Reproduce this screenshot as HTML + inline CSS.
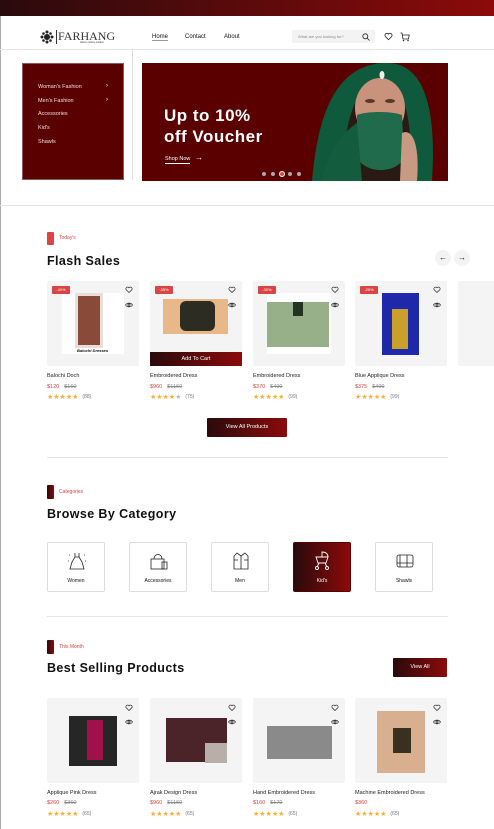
<!DOCTYPE html>
<html><head><meta charset="utf-8"><style>
*{margin:0;padding:0;box-sizing:border-box}
body{width:494px;height:829px;position:relative;background:#fff;font-family:"Liberation Sans",sans-serif;overflow:hidden;color:#111}
.a{position:absolute}
.grad{background:linear-gradient(90deg,#2a0a0c,#8c0a0a)}
.t{position:absolute;white-space:nowrap}
.card{position:absolute;width:92px;height:85px;background:#f4f4f4;border-radius:2px}
.disc{position:absolute;left:5px;top:5px;width:18px;height:8px;background:#db4444;color:#fff;font-size:4px;text-align:center;line-height:8px;border-radius:1px}
.nm{position:absolute;font-size:5.5px;color:#222}
.pr{position:absolute;font-size:5.5px}
.pr b{color:#db4444;font-weight:normal;margin-right:5px}
.pr s{color:#888;text-decoration:line-through}
.st{position:absolute;font-size:7px;color:#ffad33;letter-spacing:0;line-height:8px}
.st span{color:#777;font-size:5px;margin-left:4px;vertical-align:1px}
.cat{position:absolute;width:58px;height:50px;border:1px solid #ddd;border-radius:2px;text-align:center;font-size:5px}
.cat svg{position:absolute;left:19px;top:8px}
.cat div{position:absolute;width:100%;top:35px}
.hd{font-size:12.5px;font-weight:bold;letter-spacing:.4px}
.lbl{font-size:5px;color:#db4444}
</style></head><body>
<div class="a" style="left:0;top:0;width:1px;height:829px;background:#aaa"></div>
<div class="a grad" style="left:0;top:0;width:494px;height:16px"></div>
<svg class="a" style="left:40px;top:30px" width="14" height="14" viewBox="0 0 14 14"><g fill="#222"><circle cx="7" cy="7" r="3"/><circle cx="7" cy="2" r="1.5"/><circle cx="7" cy="12" r="1.5"/><circle cx="2" cy="7" r="1.5"/><circle cx="12" cy="7" r="1.5"/><circle cx="3.5" cy="3.5" r="1.3"/><circle cx="10.5" cy="3.5" r="1.3"/><circle cx="3.5" cy="10.5" r="1.3"/><circle cx="10.5" cy="10.5" r="1.3"/></g></svg>
<div class="a" style="left:56px;top:30px;width:1px;height:14px;background:#333"></div>
<div class="t" style="left:58px;top:29px;font-family:'Liberation Serif',serif;font-size:12px;color:#333">FARHANG</div>
<div class="t" style="left:80px;top:41px;font-size:2.5px;color:#333">where culture resides</div>
<div class="t" style="left:152px;top:34px;font-size:6px;border-bottom:1px solid #999">Home</div>
<div class="t" style="left:185px;top:34px;font-size:6px">Contact</div>
<div class="t" style="left:224px;top:34px;font-size:6px">About</div>
<div class="a" style="left:292px;top:30px;width:83px;height:13px;background:#f3f3f3;border-radius:2px"></div>
<div class="t" style="left:298px;top:34px;font-size:4px;color:#888">What are you looking for?</div>
<svg class="a" style="left:362px;top:33px" width="8" height="8" viewBox="0 0 8 8"><circle cx="3.3" cy="3.3" r="2.5" fill="none" stroke="#222" stroke-width=".8"/><path d="M5 5L7.5 7.5" stroke="#222" stroke-width=".8"/></svg>
<svg class="a" style="left:384px;top:32px" width="9" height="9" viewBox="0 0 10 10"><path d="M5 8.5L1.5 5A2 2 0 0 1 5 2.3A2 2 0 0 1 8.5 5Z" fill="none" stroke="#222" stroke-width=".9"/></svg>
<svg class="a" style="left:400px;top:32px" width="10" height="10" viewBox="0 0 10 10"><path d="M.5 1H2L3 7H8.5L9.2 3H2.5" fill="none" stroke="#222" stroke-width=".8"/><circle cx="3.5" cy="8.6" r=".7" fill="#222"/><circle cx="8" cy="8.6" r=".7" fill="#222"/></svg>
<div class="a" style="left:0;top:49px;width:494px;height:1px;background:#e6e6e6"></div>
<div class="a" style="left:132px;top:49px;width:1px;height:131px;background:#ddd"></div>
<div class="a" style="left:22px;top:63px;width:102px;height:117px;background:#5a0000;border:1px solid #8a5a5a"></div>
<div class="t" style="left:38px;top:84px;font-size:5.5px;color:#f3dede">Woman's Fashion</div>
<div class="t" style="left:106px;top:83px;font-size:6px;color:#fff">›</div>
<div class="t" style="left:38px;top:98px;font-size:5.5px;color:#f3dede">Men's Fashion</div>
<div class="t" style="left:106px;top:97px;font-size:6px;color:#fff">›</div>
<div class="t" style="left:38px;top:111px;font-size:5.5px;color:#f3dede">Accessories</div>
<div class="t" style="left:38px;top:125px;font-size:5.5px;color:#f3dede">Kid's</div>
<div class="t" style="left:38px;top:139px;font-size:5.5px;color:#f3dede">Shawls</div>
<div class="a" style="left:142px;top:63px;width:306px;height:118px;background:#5a0000;overflow:hidden">
 <svg class="a" style="left:160px;top:0" width="146" height="118" viewBox="0 0 146 118">
  <path d="M10 118C15 60 30 0 85 0C120 0 135 40 130 118Z" fill="#0f5a3c"/>
  <path d="M42 118C40 70 50 20 80 18C100 18 112 50 108 118Z" fill="#2a1a14"/>
  <ellipse cx="78" cy="45" rx="25" ry="30" fill="#c8937a"/>
  <path d="M55 52C65 48 90 48 100 52L102 95C95 110 65 112 55 95Z" fill="#1f6b4c"/>
  <ellipse cx="68" cy="38" rx="5" ry="2" fill="#5a3a2a"/><ellipse cx="88" cy="38" rx="5" ry="2" fill="#5a3a2a"/>
  <ellipse cx="80" cy="12" rx="2.5" ry="4" fill="#eee"/>
  <path d="M100 70C110 65 118 80 115 118L98 118Z" fill="#c89a82"/>
  <path d="M20 118C25 90 40 70 55 60L60 118Z" fill="#145c3e"/>
 </svg>
</div>
<div class="t" style="left:164px;top:105px;font-size:17px;font-weight:bold;color:#fff;line-height:21px;letter-spacing:.5px">Up to 10%<br>off Voucher</div>
<div class="t" style="left:165px;top:156px;font-size:5.5px;color:#fff;border-bottom:1px solid #fff;padding-bottom:1px">Shop Now</div>
<div class="t" style="left:195px;top:153px;font-size:8px;color:#fff">→</div>
<div class="a" style="left:262px;top:172px;width:4px;height:4px;border-radius:50%;background:#aaa"></div>
<div class="a" style="left:271px;top:172px;width:4px;height:4px;border-radius:50%;background:#aaa"></div>
<div class="a" style="left:279px;top:171px;width:6px;height:6px;border-radius:50%;background:#db4444;border:1px solid #fff"></div>
<div class="a" style="left:288px;top:172px;width:4px;height:4px;border-radius:50%;background:#aaa"></div>
<div class="a" style="left:297px;top:172px;width:4px;height:4px;border-radius:50%;background:#aaa"></div>
<div class="a" style="left:0;top:205px;width:494px;height:1px;background:#e6e6e6"></div>
<div class="a" style="left:47px;top:232px;width:7px;height:13px;background:#db4444;border-radius:1px"></div>
<div class="t lbl" style="left:59px;top:235px">Today's</div>
<div class="t hd" style="left:47px;top:254px">Flash Sales</div>
<div class="a" style="left:435px;top:250px;width:16px;height:16px;border-radius:50%;background:#f3f3f3;font-size:8px;text-align:center;line-height:15px">←</div>
<div class="a" style="left:454px;top:250px;width:16px;height:16px;border-radius:50%;background:#f3f3f3;font-size:8px;text-align:center;line-height:15px">→</div>
<div class="card" style="left:47px;top:281px"><div class="a" style="left:15px;top:12px;width:62px;height:61px;background:#fff"></div><div class="a" style="left:28px;top:12px;width:28px;height:55px;background:#8a4a3a;border:3px solid #e8e0d8"></div><div class="t" style="left:30px;top:67px;font-size:4px;font-style:italic;font-weight:bold">Balochi Dresses</div><div class="disc">-40%</div></div>
<div class="card" style="left:150px;top:281px"><div class="a" style="left:13px;top:18px;width:65px;height:35px;background:#e8b888"></div><div class="a" style="left:30px;top:20px;width:35px;height:30px;background:#2c2c22;border-radius:6px"></div><div class="disc">-35%</div><div class="a grad" style="left:0;top:71px;width:92px;height:14px;color:#fff;font-size:5.5px;text-align:center;line-height:14px">Add To Cart</div></div>
<div class="card" style="left:253px;top:281px"><div class="a" style="left:14px;top:12px;width:64px;height:61px;background:#fff"></div><div class="a" style="left:14px;top:21px;width:62px;height:45px;background:#98b08a"></div><div class="a" style="left:40px;top:21px;width:10px;height:14px;background:#223322"></div><div class="disc">-30%</div></div>
<div class="card" style="left:355px;top:281px"><div class="a" style="left:27px;top:12px;width:37px;height:62px;background:#1e28a8"></div><div class="a" style="left:37px;top:28px;width:16px;height:40px;background:#c9a12a"></div><div class="disc">-25%</div></div>
<div class="card" style="left:458px;top:281px;width:40px"></div>
<div class="nm" style="left:47px;top:373px">Balochi Doch</div>
<div class="pr" style="left:47px;top:384px"><b>$120</b><s>$160</s></div>
<div class="st" style="left:47px;top:393px">★★★★★<span>(88)</span></div>
<div class="nm" style="left:150px;top:373px">Embroidered Dress</div>
<div class="pr" style="left:150px;top:384px"><b>$960</b><s>$1160</s></div>
<div class="st" style="left:150px;top:393px">★★★★<i style="color:#bbb;font-style:normal">★</i><span>(75)</span></div>
<div class="nm" style="left:253px;top:373px">Embroidered Dress</div>
<div class="pr" style="left:253px;top:384px"><b>$370</b><s>$400</s></div>
<div class="st" style="left:253px;top:393px">★★★★★<span>(99)</span></div>
<div class="nm" style="left:355px;top:373px">Blue Applique Dress</div>
<div class="pr" style="left:355px;top:384px"><b>$375</b><s>$400</s></div>
<div class="st" style="left:355px;top:393px">★★★★★<span>(99)</span></div>
<div class="a grad" style="left:207px;top:418px;width:80px;height:19px;color:#fff;font-size:5.5px;text-align:center;line-height:19px;border-radius:1px">View All Products</div>
<div class="a" style="left:47px;top:457px;width:401px;height:1px;background:#e6e6e6"></div>
<div class="a grad" style="left:47px;top:485px;width:7px;height:14px;border-radius:1px"></div>
<div class="t lbl" style="left:59px;top:489px">Categories</div>
<div class="t hd" style="left:47px;top:507px">Browse By Category</div>
<div class="cat" style="left:47px;top:542px"><svg width="20" height="20" viewBox="0 0 20 20" fill="none" stroke="#222" stroke-width=".8"><path d="M8 2V6L5 11L3 18H17L15 11L12 6V2M8 6H12"/><path d="M2 4L3 4M17 4H18M1 10H2M18 10H19"/></svg><div>Women</div></div>
<div class="cat" style="left:129px;top:542px"><svg width="20" height="20" viewBox="0 0 20 20" fill="none" stroke="#222" stroke-width=".8"><rect x="2" y="8" width="13" height="10"/><path d="M5 8C5 2 13 2 13 8"/><rect x="13" y="11" width="5" height="7"/></svg><div>Accessories</div></div>
<div class="cat" style="left:211px;top:542px"><svg width="20" height="20" viewBox="0 0 20 20" fill="none" stroke="#222" stroke-width=".8"><path d="M6 2L3 5V18H17V5L14 2L10 5Z M10 5V18M3 9H7M13 9H17"/></svg><div>Men</div></div>
<div class="cat grad" style="left:293px;top:542px;border-color:#5a0000;color:#fff"><svg width="20" height="20" viewBox="0 0 20 20" fill="none" stroke="#fff" stroke-width=".9"><path d="M3 6H15L13 12H5Z M9 6V1C13 1 15 3 15 6M6 12L4 16M12 12L14 16"/><circle cx="4" cy="17" r="1.5"/><circle cx="14" cy="17" r="1.5"/></svg><div>Kid's</div></div>
<div class="cat" style="left:375px;top:542px"><svg width="20" height="20" viewBox="0 0 20 20" fill="none" stroke="#222" stroke-width=".8"><rect x="2" y="4" width="16" height="12" rx="2"/><path d="M5 4V16M12 4V16M2 12H18"/></svg><div>Shawls</div></div>
<div class="a" style="left:47px;top:616px;width:401px;height:1px;background:#e6e6e6"></div>
<div class="a grad" style="left:47px;top:640px;width:7px;height:14px;border-radius:1px"></div>
<div class="t lbl" style="left:59px;top:644px">This Month</div>
<div class="t hd" style="left:47px;top:661px">Best Selling Products</div>
<div class="a grad" style="left:393px;top:658px;width:54px;height:19px;color:#fff;font-size:5.5px;text-align:center;line-height:19px;border-radius:1px">View All</div>
<div class="card" style="left:47px;top:698px"><div class="a" style="left:22px;top:18px;width:48px;height:50px;background:#262626"></div><div class="a" style="left:40px;top:22px;width:16px;height:40px;background:#a0104a"></div></div>
<div class="card" style="left:150px;top:698px"><div class="a" style="left:16px;top:20px;width:61px;height:44px;background:#4a2428"></div><div class="a" style="left:55px;top:45px;width:22px;height:20px;background:#b8b0a8"></div></div>
<div class="card" style="left:253px;top:698px"><div class="a" style="left:14px;top:28px;width:65px;height:33px;background:#8a8a8a"></div></div>
<div class="card" style="left:355px;top:698px"><div class="a" style="left:22px;top:13px;width:48px;height:62px;background:#d8b090"></div><div class="a" style="left:38px;top:30px;width:18px;height:25px;background:#3a3020"></div></div>
<div class="nm" style="left:47px;top:790px">Applique Pink Dress</div>
<div class="pr" style="left:47px;top:800px"><b>$260</b><s>$360</s></div>
<div class="st" style="left:47px;top:810px">★★★★★<span>(65)</span></div>
<div class="nm" style="left:150px;top:790px">Ajrak Design Dress</div>
<div class="pr" style="left:150px;top:800px"><b>$960</b><s>$1160</s></div>
<div class="st" style="left:150px;top:810px">★★★★★<span>(65)</span></div>
<div class="nm" style="left:253px;top:790px">Hand Embroidered Dress</div>
<div class="pr" style="left:253px;top:800px"><b>$160</b><s>$170</s></div>
<div class="st" style="left:253px;top:810px">★★★★★<span>(65)</span></div>
<div class="nm" style="left:355px;top:790px">Machine Embroidered Dress</div>
<div class="pr" style="left:355px;top:800px"><b>$360</b></div>
<div class="st" style="left:355px;top:810px">★★★★★<span>(65)</span></div>
<svg width="0" height="0" style="position:absolute"><defs>
<g id="h"><path d="M4 6.5L1.2 3.8A1.5 1.5 0 0 1 4 1.8A1.5 1.5 0 0 1 6.8 3.8Z" fill="none" stroke="#222" stroke-width=".7"/></g>
<g id="e"><path d="M.5 4C2 1.5 6 1.5 7.5 4C6 6.5 2 6.5 .5 4Z" fill="none" stroke="#222" stroke-width=".7"/><circle cx="4" cy="4" r="1.1" fill="none" stroke="#222" stroke-width=".7"/></g>
</defs></svg>
<svg class="a" style="left:0;top:0" width="494" height="829">
<use href="#h" x="125" y="286"/><use href="#e" x="125" y="301"/>
<use href="#h" x="228" y="286"/><use href="#e" x="228" y="301"/>
<use href="#h" x="331" y="286"/><use href="#e" x="331" y="301"/>
<use href="#h" x="433" y="286"/><use href="#e" x="433" y="301"/>
<use href="#h" x="125" y="704"/><use href="#e" x="125" y="718"/>
<use href="#h" x="228" y="704"/><use href="#e" x="228" y="718"/>
<use href="#h" x="331" y="704"/><use href="#e" x="331" y="718"/>
<use href="#h" x="433" y="704"/><use href="#e" x="433" y="718"/>
</svg>
</body></html>
